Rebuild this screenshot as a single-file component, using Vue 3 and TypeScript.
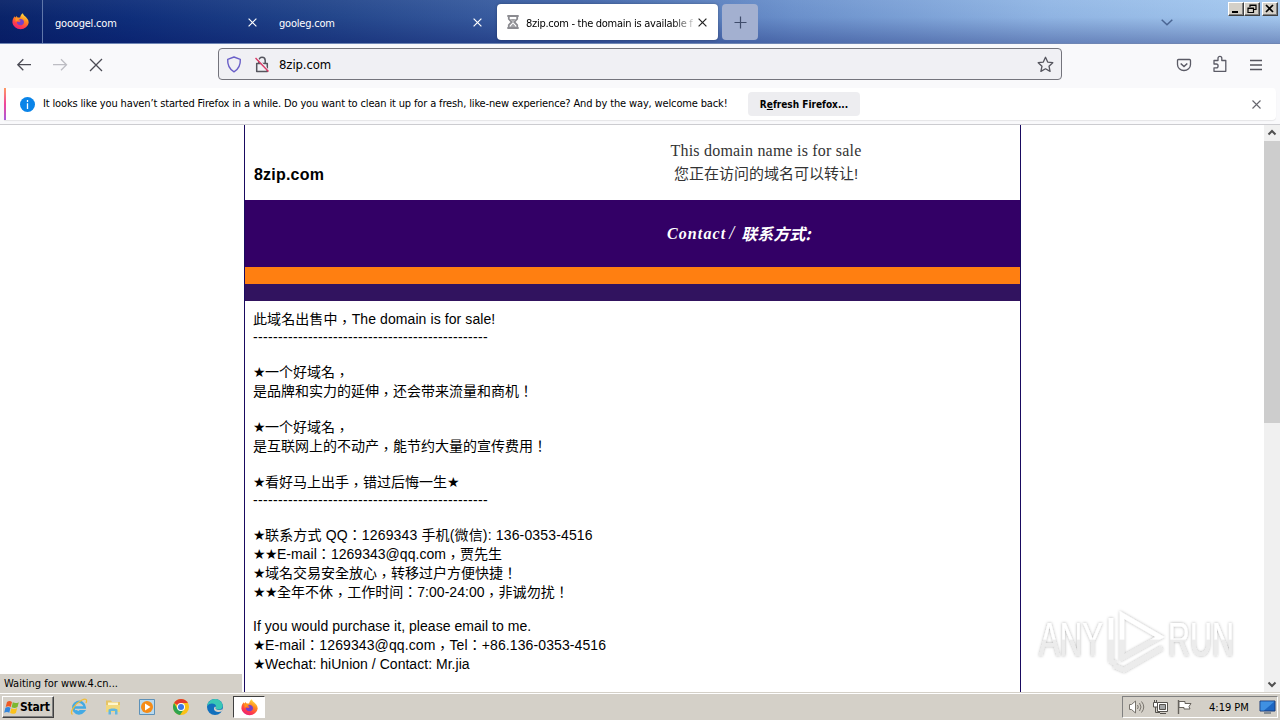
<script setup lang="ts">
interface Line {
  text: string
  kind: string
}

const lines: Line[] = [
  { text: '此域名出售中，The domain is for sale!', kind: 'cjk l1' },
  { text: '-----------------------------------------------', kind: 'rule' },
  { text: '', kind: '' },
  { text: '★一个好域名，', kind: 'cjk' },
  { text: '是品牌和实力的延伸，还会带来流量和商机！', kind: 'cjk' },
  { text: '', kind: '' },
  { text: '★一个好域名，', kind: 'cjk' },
  { text: '是互联网上的不动产，能节约大量的宣传费用！', kind: 'cjk' },
  { text: '', kind: '' },
  { text: '★看好马上出手，错过后悔一生★', kind: 'cjk' },
  { text: '-----------------------------------------------', kind: 'rule' },
  { text: '', kind: '' },
  { text: '★联系方式 QQ：1269343 手机(微信): 136-0353-4516', kind: 'cjk tel' },
  { text: '★★E-mail：1269343@qq.com，贾先生', kind: 'cjk mail' },
  { text: '★域名交易安全放心，转移过户方便快捷！', kind: 'cjk' },
  { text: '★★全年不休，工作时间：7:00-24:00，非诚勿扰！', kind: 'cjk mail' },
  { text: '', kind: 'short' },
  { text: 'If you would purchase it, please email to me.', kind: 'latin' },
  { text: '★E-mail：1269343@qq.com，Tel：+86.136-0353-4516', kind: 'cjk both' },
  { text: '★Wechat: hiUnion / Contact: Mr.jia', kind: 'cjk mail' },
]

// Stars and commas sit differently from the rest of the text, so they get their own spans.
const split = (s: string): string[] => s.split(/(★|，)/).filter((p) => p !== '')
const partClass = (p: string): string => (p === '★' ? 'st' : p === '，' ? 'cm' : 'tx')
</script>

<template>
  <div class="screen">
    <svg class="defs" width="0" height="0">
      <defs>
        <linearGradient id="fx" x1="0.8" y1="0" x2="0.3" y2="1">
          <stop offset="0" stop-color="#fff04a" />
          <stop offset="0.4" stop-color="#ff8a1e" />
          <stop offset="0.75" stop-color="#ff3b4a" />
          <stop offset="1" stop-color="#e8207c" />
        </linearGradient>
        <symbol id="firefox" viewBox="0 0 16 16">
          <path d="M10.2.2c.4 1.5 1.200 2 2.100 2.900 1.500 1.300 3.500 3.300 3.400 6A7.700 6.900 0 0 1 .4 9.100C.3 6.500 1.100 4.500 2.700 3l.3 1.500 1.300-1.700.8 1.500h2.500C8 2.500 8.700 1 10.200.2z" fill="url(#fx)" />
          <path d="M5.300 6c1.500-1 5-.4 5.800 1.600.7 2.300-.9 4-3 4-2.400 0-3.700-1.500-3.500-3.400l2.600.2 1-1.200z" fill="#7541c9" />
          <path d="M3 4.600c.8-.6 2-.5 3 .1l2 .2c-.3 1.200-1.700 1.200-2 2-.4.900-2.200.6-2.400 1.900" fill="#ff9520" />
        </symbol>
      </defs>
    </svg>

    <header class="titlebar">
      <div class="fxbox"><svg width="17" height="17"><use href="#firefox" /></svg></div>
      <div class="tab t1">
        <span>gooogel.com</span>
        <svg class="x" width="9" height="9" viewBox="0 0 9 9"><path d="M.6.6l7.800 7.800M8.400.6L.6 8.400" /></svg>
      </div>
      <div class="tab t2">
        <span>gooleg.com</span>
        <svg class="x" width="9" height="9" viewBox="0 0 9 9"><path d="M.6.6l7.800 7.800M8.400.6L.6 8.400" /></svg>
      </div>
      <div class="tab active">
        <svg class="glass" width="12" height="14" viewBox="0 0 12 14"><path d="M.3 1h11.400M.3 13h11.400M1.800 1v3L4.800 7l-3 3v3M10.200 1v3L7.200 7l3 3v3" fill="none" stroke="#8b8b90" stroke-width="1.800" /><path d="M3.500 4h5L6 6.500zM6 8.500L9 12H3z" fill="#a2a2a6" /></svg>
        <span class="ttl">8zip.com - the domain is available f</span>
        <svg class="x" width="9" height="9" viewBox="0 0 9 9"><path d="M.6.6l7.800 7.800M8.400.6L.6 8.400" /></svg>
      </div>
      <div class="newtab"><svg width="13" height="13" viewBox="0 0 13 13"><path d="M6.500.5v12M.5 6.500h12" stroke="#3f4c6b" stroke-width="1.200" /></svg></div>
      <svg class="chev" width="12" height="7" viewBox="0 0 12 7"><path d="M.7.7L6 5.800 11.300.7" fill="none" stroke="#4a6593" stroke-width="1.500" /></svg>
      <div class="winbtns">
        <i><svg width="14" height="12" viewBox="0 0 14 12"><path d="M3 9h6" stroke="#000" stroke-width="2" /></svg></i>
        <i><svg width="14" height="12" viewBox="0 0 14 12"><path d="M5 4V2h6v4.500H9M5 2.500h6" fill="none" stroke="#000" stroke-width="1.200" /><path d="M3 5h5.500v4.500H3zM3 5.500h5.500" fill="none" stroke="#000" stroke-width="1.200" /></svg></i>
        <i class="gap"><svg width="14" height="12" viewBox="0 0 14 12"><path d="M3 2l7 7M10 2L3 9" stroke="#000" stroke-width="1.700" /></svg></i>
      </div>
    </header>

    <nav class="toolbar">
      <svg class="nav" width="110" height="20" viewBox="0 0 110 20" fill="none" stroke="#4b4b54" stroke-width="1.300">
        <path d="M17 9.700H3.500M9.300 4.200L3.800 9.700l5.500 5.500" />
        <path d="M39 9.700h13.500M47 4.200l5.500 5.500-5.500 5.500" stroke="#bdbdc3" />
        <path d="M76 4l12 12M88 4L76 16" />
      </svg>
      <div class="url">
        <svg class="shield" width="16" height="17" viewBox="0 0 16 17"><path d="M8 1l6.300 2.300c.3 5-1 9.500-6.300 12.500C2.700 12.800 1.400 8.300 1.700 3.300z" fill="none" stroke="#6a5fc8" stroke-width="1.400" stroke-linejoin="round" /></svg>
        <svg class="lock" width="16" height="17" viewBox="0 0 16 17"><path d="M4.800 7V4.500a3.200 3.200 0 0 1 6.400 0V7M2.700 7.500h10.600v8H2.700z" fill="none" stroke="#55555e" stroke-width="1.500" stroke-linejoin="round" /><path d="M2.500 1.500l13 14" stroke="#f0f0f4" stroke-width="1.500" /><path d="M1.500 2l13 13.500" stroke="#d93a66" stroke-width="1.400" /></svg>
        <span>8zip.com</span>
        <svg class="star" width="17" height="17" viewBox="0 0 17 17"><path d="M8.500 1.300l2.200 4.800 5.100.6-3.800 3.500 1.100 5.200-4.600-2.600-4.600 2.600L5 10.200 1.200 6.700l5.100-.6z" fill="none" stroke="#55555e" stroke-width="1.300" stroke-linejoin="round" /></svg>
      </div>
      <div class="tools">
        <svg width="16" height="16" viewBox="0 0 16 16" fill="none" stroke="#5b5b66" stroke-width="1.300"><path d="M2.500 2.500h11a1 1 0 0 1 1 1v4a6.500 6 0 0 1-13 0v-4a1 1 0 0 1 1-1z" /><path d="M4.700 6.500L8 9.500l3.300-3" stroke-width="1.600" /></svg>
        <svg width="16" height="18" viewBox="0 0 16 18" fill="none" stroke="#5b5b66" stroke-width="1.300" stroke-linejoin="round"><path d="M2 8V5.500h4V3.200a1.900 1.900 0 0 1 3.800 0v2.300h4v10.800H2v-3.500h2.200a1.900 1.900 0 0 0 0-3.800H2z" /></svg>
        <svg width="14" height="12" viewBox="0 0 14 12" stroke="#55555e" stroke-width="1.300"><path d="M1 1.500h12M1 6h12M1 10.500h12" /></svg>
      </div>
    </nav>

    <div class="noticewrap">
      <div class="notice">
        <svg class="info" width="15" height="15" viewBox="0 0 15 15"><circle cx="7.500" cy="7.500" r="7.500" fill="#0a84e8" /><path d="M7.500 3v2M7.500 6.300V12" stroke="#fff" stroke-width="1.300" /></svg>
        <span class="msg">It looks like you haven’t started Firefox in a while. Do you want to clean it up for a fresh, like-new experience? And by the way, welcome back!</span>
        <button class="refresh"><span>R<u>e</u>fresh Firefox...</span></button>
        <svg class="nx" width="9" height="9" viewBox="0 0 9 9"><path d="M.5.5l8 8M8.500.5l-8 8" stroke="#66666d" stroke-width="1.100" /></svg>
      </div>
    </div>

    <main class="view">
      <div class="page">
        <section class="head">
          <b class="domain">8zip.com</b>
          <div class="sale">
            <div class="en"><span>This domain name is for sale</span></div>
            <div class="zh"><span>您正在访问的域名可以转让!</span></div>
          </div>
        </section>
        <section class="contact"><span class="ct">Contact</span><span class="sl">/</span><span class="cz">联系方式:</span></section>
        <div class="orange"></div>
        <div class="indigo"></div>
        <section class="body">
          <div v-for="(l, i) in lines" :key="i" class="line" :class="l.kind">
            <span v-for="(p, j) in split(l.text)" :key="j" :class="partClass(p)">{{ p }}</span>
          </div>
        </section>
      </div>
      <div class="scroll">
        <svg width="16" height="16" viewBox="0 0 16 16"><path d="M4.500 9.500L8 6l3.500 3.500" fill="none" stroke="#505050" stroke-width="2" /></svg>
        <div class="thumb"></div>
        <svg class="dn" width="16" height="16" viewBox="0 0 16 16"><path d="M4.500 6.500L8 10l3.500-3.500" fill="none" stroke="#505050" stroke-width="2" /></svg>
      </div>
      <div class="status"><span>Waiting for www.4.cn...</span></div>
      <svg class="mark" width="248" height="80" viewBox="0 0 248 80">
        <defs>
          <linearGradient id="wm" gradientUnits="userSpaceOnUse" x1="0" y1="0" x2="0" y2="80">
            <stop offset="0.49" stop-color="#fff" />
            <stop offset="0.5" stop-color="#ececec" />
          </linearGradient>
          <filter id="glow" filterUnits="userSpaceOnUse" x="0" y="0" width="230" height="80">
            <feDropShadow dx="0" dy="0" stdDeviation="1.800" flood-color="#000" flood-opacity="0.33" />
          </filter>
        </defs>
        <g filter="url(#glow)" fill="url(#wm)">
          <text x="8" y="56" font-size="49" textLength="64" lengthAdjust="spacingAndGlyphs">ANY</text>
          <text x="137" y="56" font-size="49" textLength="66" lengthAdjust="spacingAndGlyphs">RUN</text>
          <g fill="none" stroke="url(#wm)" stroke-width="4.500">
            <path d="M91 15v43l38-21z" />
            <path d="M80 18v43l5 3" />
            <path d="M83 66l10 4 38-22" />
          </g>
        </g>
      </svg>
    </main>

    <footer class="taskbar">
      <div class="start">
        <svg width="16" height="15" viewBox="0 0 16 15"><path d="M3 2C5 .5 6.500 1 8 2L6.800 7C5.300 6 3.500 5.900 1.700 7z" fill="#ee5a24" /><path d="M8.800 2.300c2 1 4 1 6-.1L13.500 7c-1.900 1.200-3.900 1.200-5.900.2z" fill="#7cb82f" /><path d="M1.400 7.800c1.900-1 3.600-1 5.100 0L5.300 12.700c-1.500-1-3.200-1-5.100 0z" fill="#3386dc" /><path d="M7.300 8.200c2 1 3.900 1 5.900-.1l-1.300 4.900c-2 1.100-3.900 1.100-5.800.1z" fill="#fbc21b" /></svg>
        <b>Start</b>
      </div>
      <div class="apps">
        <svg width="18" height="18" viewBox="0 0 18 18"><path d="M4.500 9.500h10.300A5.800 5.800 0 1 0 13.500 13.300h-3.300c-1.800 1.600-4.200.8-4.300-1.200" fill="none" stroke="#43aae4" stroke-width="2.500" /><path d="M2.500 16.500C-1 14.500 5 5.500 12 2c4-2 5.500-.5 4 3" fill="none" stroke="#f0bd37" stroke-width="1.300" /></svg>
        <svg width="18" height="18" viewBox="0 0 18 18"><path d="M2 2.500h5l1 1.500h8v10H2z" fill="#e6c465" /><path d="M4 4.500h10v4H4z" fill="#fff6cb" /><path d="M2 7h14v7H2z" fill="#f2d87c" /><path d="M4.500 16.500V12c0-2 9-2 9 0v4.500h-2.500V13H7v3.500z" fill="#62b7df" /></svg>
        <svg width="18" height="18" viewBox="0 0 18 18"><path d="M1.500 1.500h15v15h-15z" fill="#b9d9ee" stroke="#5d91b8" /><circle cx="9" cy="9" r="6" fill="#f58b16" /><path d="M7 5.500v7L12.500 9z" fill="#fff" /></svg>
        <svg width="18" height="18" viewBox="0 0 18 18"><circle cx="9" cy="9" r="8" fill="#fbc116" /><path d="M9 9L2.100 5A8 8 0 0 1 15.900 5H9z" fill="#e33b2e" /><path d="M2.100 5a8 8 0 0 0 5.900 12L12 11 5.500 11z" fill="#2ea44f" /><circle cx="9" cy="9" r="4" fill="#fff" /><circle cx="9" cy="9" r="3" fill="#3b78e7" /></svg>
        <svg width="18" height="18" viewBox="0 0 18 18"><circle cx="9" cy="9" r="8" fill="#1170bd" /><path d="M1.200 8C2 2 9-1 14 2.800c3.500 3 3.700 8.200-.5 8.700-3.500.2-4.500-1-3.500-2.500C11 5.500 4 3.500 1.200 8z" fill="#39c7b5" /><path d="M10 9c-1 1-.5 3 3.500 3 2 0 3.200-1 3.500-1.500l-.8 2.700c-4 2-8.700 0-8.200-3 .2-1.400 1-2 2-1.200z" fill="#d4d0c8" /></svg>
        <div class="cur"><svg width="17" height="17"><use href="#firefox" /></svg></div>
      </div>
      <div class="tray">
        <svg width="17" height="16" viewBox="0 0 17 16" fill="none" stroke="#77736c"><path d="M1.500 5.500h2L7.500 2v12l-4-3.500h-2z" fill="#fff" /><path d="M9.500 6q1.500 2 0 4M11.500 4q3 4 0 8M13.500 2.500q4.500 5.500 0 11" /></svg>
        <svg width="17" height="16" viewBox="0 0 17 16" fill="none" stroke="#55524d"><path d="M5.500 3.500h10v9h-10z" fill="#fff" /><path d="M7.500 5.500h6v5h-6z" fill="#a4a6a7" /><path d="M8 14.500h6M3.500 8v5.500H8" /><path d="M1.500 3.500h4V8h-4zM2.500 1v2M4.500 1v2" fill="#fff" /></svg>
        <svg width="17" height="16" viewBox="0 0 17 16" fill="none" stroke="#66625c"><path d="M2.500 1v14" stroke-width="1.400" /><path d="M3 2.500h6v2h6l-2 3 1 2.500H8V8.500H3z" fill="#fff" /></svg>
        <span class="clock">4:19 PM</span>
        <svg class="desk" width="17" height="14" viewBox="0 0 17 14"><path d="M1 1h15v10H1z" fill="#1d66c2" stroke="#1c3c78" /><path d="M1.500 1.500h14L5 10.500H1.500z" fill="#3f90e2" /><path d="M5 13h7" stroke="#6e7882" stroke-width="1.500" /></svg>
      </div>
    </footer>
  </div>
</template>

<style>
html, body { margin: 0; overflow: hidden; }
</style>

<style scoped>
.screen { width: 1280px; height: 720px; display: flex; flex-direction: column; overflow: hidden; background: #fff; font-family: "DejaVu Sans Condensed", "DejaVu Sans", sans-serif; font-stretch: condensed; font-size: 11px; color: #000; position: relative; white-space: nowrap; }
.screen svg { display: block; flex: none; }
.screen .defs { position: absolute; }
.titlebar { height: 44px; box-sizing: border-box; flex: none; display: flex; align-items: flex-start; border-bottom: 1px solid #6f86b4; background: linear-gradient(180deg, rgba(255,255,255,.04), rgba(0,10,80,.02) 40%, rgba(0,10,90,.3)), linear-gradient(90deg, #0a246a 0, #0f2f7b 10%, #24478c 26%, #4468ab 46%, #6c92cd 62%, #92b7e5 82%, #a6caf0 100%); }
.fxbox { width: 42px; height: 43px; border-right: 1px solid #6077aa; display: flex; align-items: center; justify-content: center; padding-right: 2px; box-sizing: border-box; flex: 0 0 43px; }
.tab { display: flex; align-items: center; box-sizing: border-box; height: 36px; margin-top: 4px; color: #fff; padding-top: 2px; letter-spacing: -.2px; }
.tab .x { margin-left: auto; margin-top: -2px; stroke: #fff; stroke-width: 1.2; }
.t1 { width: 214px; margin-left: 12px; padding-right: 12px; margin-right: 10px; }
.t2 { width: 215px; padding-right: 12px; margin-right: 3px; }
.tab.active { width: 221px; background: #fff; color: #000; border-radius: 4px; padding-left: 10px; padding-right: 11px; box-shadow: 0 0 3px rgba(0,0,0,.3); }
.active .x { stroke: #222; }
.glass { margin-top: -2px; }
.ttl { width: 169px; margin-left: 7px; letter-spacing: -.28px; -webkit-mask-image: linear-gradient(90deg, #000 145px, transparent 173px); mask-image: linear-gradient(90deg, #000 145px, transparent 173px); }
.newtab { width: 36px; height: 36px; margin: 4px 0 0 4px; background: #a3b0d0; border-radius: 4px; display: flex; align-items: center; justify-content: center; flex: none; }
.chev { margin: 19px 0 0 403px; }
.winbtns { display: flex; margin: 2px 2px 0 auto; }
.winbtns i { display: block; width: 16px; height: 14px; box-sizing: border-box; background: #d4d0c8; border: 1px solid; border-color: #fff #404040 #404040 #fff; box-shadow: inset -1px -1px #808080; overflow: hidden; }
.winbtns .gap { margin-left: 2px; }
.toolbar { height: 44px; flex: none; display: flex; align-items: flex-start; background: #f9f9fb; }
.nav { margin: 11px 0 0 14px; }
.url { width: 844px; height: 32px; box-sizing: border-box; margin: 4px 0 0 94px; border: 1px solid #74747c; border-radius: 4px; background: #f0f0f4; display: flex; align-items: center; padding: 0 7px; font-size: 13px; }
.lock { margin-left: 12px; }
.url span { margin-left: 9px; letter-spacing: -.1px; }
.star { margin-left: auto; }
.tools { display: flex; align-items: center; gap: 22px; height: 41px; margin-left: 114px; }
.tools svg:nth-child(3) { margin-left: -1px; }
.tools svg:nth-child(2) { margin-left: -2px; margin-top: -2px; }
.noticewrap { height: 37px; flex: none; box-sizing: border-box; background: #f9f9fb; padding: 0 4px; border-bottom: 1px solid #ccccd0; }
.notice { height: 32px; background: #fff; border-radius: 0 4px 4px 0; display: flex; align-items: center; box-shadow: 0 1px 1px rgba(0,0,0,.08); }
.notice::before { content: ""; width: 2px; height: 32px; background: linear-gradient(#ff9a62, #f0459a 50%, #a85adb); flex: none; }
.info { margin-left: 14px; }
.msg { margin-left: 8px; width: 685px; margin-top: -2px; letter-spacing: -.145px; }
.refresh { width: 112px; height: 24px; margin: 0 0 0 20px; padding: 1px 0 0; border: 0; border-radius: 4px; background: #ededf0; font: bold 10px "DejaVu Sans Condensed", sans-serif; color: #000; text-align: center; }
.nx { margin-left: auto; margin-right: 15px; }
.view { height: 567px; flex: none; position: relative; display: flex; overflow: hidden; background: #fff; }
.page { width: 775px; margin-left: 244px; border: solid #190a60; border-width: 0 1px; height: 567px; font-family: "Liberation Sans", "Noto Sans CJK TC", sans-serif; font-stretch: normal; }
.head { height: 75px; display: flex; }
.domain { font-size: 16px; line-height: 20px; margin: 40px 0 0 9px; width: 258px; letter-spacing: .2px; }
.sale { width: 508px; padding-left: 7px; box-sizing: content-box; text-align: center; color: #333; font-size: 15px; padding-top: 14px; flex: none; margin-left: -1px; }
.en { font-family: "Liberation Serif", serif; font-size: 16px; line-height: 23px; letter-spacing: .2px; }
.zh { font-family: "Liberation Sans", "Noto Sans CJK SC", sans-serif; font-size: 15px; line-height: 23px; }
.contact { height: 67px; background: #330066; color: #fff; display: flex; align-items: center; font: italic bold 16px "Liberation Serif", "Noto Sans CJK SC", serif; padding-left: 422px; box-sizing: border-box; }
.ct { letter-spacing: 1.1px; }
.sl { width: 12px; margin-left: 3px; font-weight: normal; font-size: 18px; }
.cz { font-size: 16px; line-height: 20px; font-family: "Noto Sans CJK SC", sans-serif; padding-bottom: 1px; }
.orange { height: 17px; background: #ff7f11; }
.indigo { height: 17px; background: #31135f; }
.body { padding: 9px 0 0 8px; font-size: 14px; }
.line { height: 17px; line-height: 17px; display: flex; }
.cjk { height: 19px; line-height: 19px; }
.line span { white-space: pre; }
.short { height: 16px; }
.latin { height: 18px; letter-spacing: .045px; }
.rule { letter-spacing: .338px; }
.l1 { letter-spacing: .09px; }
.tel { letter-spacing: .15px; }
.mail { letter-spacing: .03px; }
.both { letter-spacing: .1px; }
.st { width: 12px; font-size: 14px; font-family: "DejaVu Sans", sans-serif; letter-spacing: 0; }
.line .cm { padding-top: 3px; }
.scroll { width: 16px; margin-left: auto; background: #f0f0f0; display: flex; flex-direction: column; }
.thumb { height: 282px; background: #cdcdcd; }
.dn { margin-top: auto; }
.status { position: absolute; left: 0; bottom: 0; width: 242px; height: 18px; background: #d4d0c8; line-height: 20px; padding-left: 4px; box-sizing: border-box; }
.mark { position: absolute; left: 1031px; top: 475px; font-family: "Liberation Sans", sans-serif; }
.taskbar { height: 28px; flex: none; box-sizing: border-box; background: #d4d0c8; display: flex; align-items: flex-start; border-top: 1px solid #d4d0c8; box-shadow: inset 0 1px #fff; }
.start { margin: 3px 0 0 2px; width: 52px; height: 22px; box-sizing: border-box; border: 1px solid; border-color: #fff #404040 #404040 #fff; box-shadow: inset -1px -1px #808080; display: flex; align-items: center; font-size: 12px; letter-spacing: -.2px; padding-left: 1px; }
.apps { display: flex; align-items: center; gap: 16px; margin: 3px 0 0 16px; height: 22px; }
.cur { width: 32px; height: 22px; box-sizing: border-box; background: #fff; border: 1px solid; border-color: #404040 #fff #fff #404040; display: flex; align-items: center; justify-content: center; margin-left: -7px; }
.tray { margin: 3px 2px 0 auto; width: 156px; height: 22px; box-sizing: border-box; border: 1px solid; border-color: #808080 #fff #fff #808080; display: flex; align-items: center; gap: 7px; padding-left: 5px; }
.clock { margin-left: 9px; width: 41px; }
.desk { margin-left: 2px; }
</style>
